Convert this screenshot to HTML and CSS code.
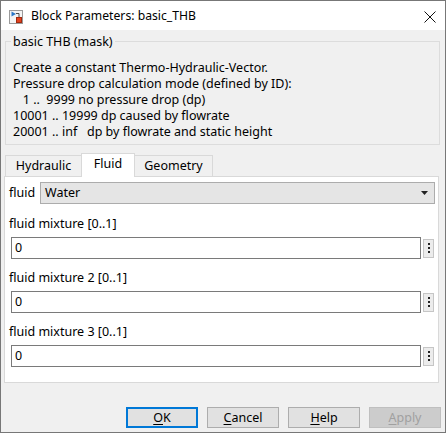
FILE: index.html
```html
<!DOCTYPE html>
<html>
<head>
<meta charset="utf-8">
<link rel="stylesheet" href="styles.css">
</head>
<body>
<div class="window">
  <div class="titlebar">
    <svg class="app-icon" width="14" height="14" viewBox="0 0 14 14">
      <rect x="0.5" y="0.5" width="13" height="13" fill="#f4f4f4" stroke="#9a9a9a"/>
      <path d="M7 3.5 H10 V7" fill="none" stroke="#4a4a4a" stroke-width="1"/>
      <polygon points="2.5,1.5 2.5,6.5 7,4" fill="#2a78c8"/>
      <rect x="7.5" y="7.5" width="5" height="5" fill="#e2421d" stroke="#a02a10"/>
    </svg>
    <span class="title">Block Parameters: basic_THB</span>
    <svg class="close" width="12" height="12" viewBox="0 0 12 12">
      <path d="M0.5 0.5 L11.5 11.5 M11.5 0.5 L0.5 11.5" stroke="#111" stroke-width="1"/>
    </svg>
  </div>
  <div class="content">
    <div class="group">
      <div class="group-title">basic THB (mask)</div>
      <div class="desc">Create a constant Thermo-Hydraulic-Vector.
Pressure drop calculation mode (defined by ID):
   1 ..  9999 no pressure drop (dp)
10001 .. 19999 dp caused by flowrate
20001 .. inf   dp by flowrate and static height</div>
    </div>
    <div class="tabs">
      <div class="tab tab-hyd">Hydraulic</div>
      <div class="tab tab-fluid active">Fluid</div>
      <div class="tab tab-geo">Geometry</div>
    </div>
    <div class="panel">
      <div class="fluid-row">
        <span class="fluid-label">fluid</span>
        <div class="select">
          <span>Water</span>
          <svg class="arrow" width="7" height="4" viewBox="0 0 7 4"><polygon points="0,0 7,0 3.5,4" fill="#222"/></svg>
        </div>
      </div>
      <div class="field">
        <div class="label">fluid mixture [0..1]</div>
        <div class="input-row">
          <div class="input">0</div>
          <div class="dots"><i></i><i></i><i></i></div>
        </div>
      </div>
      <div class="field">
        <div class="label">fluid mixture 2 [0..1]</div>
        <div class="input-row">
          <div class="input">0</div>
          <div class="dots"><i></i><i></i><i></i></div>
        </div>
      </div>
      <div class="field">
        <div class="label">fluid mixture 3 [0..1]</div>
        <div class="input-row">
          <div class="input">0</div>
          <div class="dots"><i></i><i></i><i></i></div>
        </div>
      </div>
    </div>
    <div class="buttons">
      <div class="btn btn-default"><u>O</u>K</div>
      <div class="btn"><u>C</u>ancel</div>
      <div class="btn"><u>H</u>elp</div>
      <div class="btn btn-disabled"><u>A</u>pply</div>
    </div>
  </div>
</div>
</body>
</html>
```

FILE: styles.css
```css
* { box-sizing: border-box; }
html, body { margin: 0; padding: 0; }
body {
  width: 446px;
  height: 433px;
  font-family: "Noto Sans", "Segoe UI", sans-serif;
  font-size: 12.5px;
  color: #000;
  background: #f0f0f0;
}
.window {
  width: 446px;
  height: 433px;
  border: 1px solid #777;
  background: #f0f0f0;
  display: flex;
  flex-direction: column;
}
.titlebar {
  height: 29px;
  background: #fff;
  display: flex;
  align-items: center;
  padding-left: 8px;
  flex-shrink: 0;
}
.app-icon { display: block; margin-top: 2px; }
.title {
  margin-left: 8px;
  font-size: 12.2px;
  line-height: 16px;
  margin-top: 1px;
}
.close {
  margin-left: auto;
  margin-right: 9px;
  margin-top: 2px;
  display: block;
}
.content {
  flex: 1;
  display: flex;
  flex-direction: column;
}
.group {
  margin: 11px 5px 0 4px;
  border: 1px solid #dcdcdc;
  padding: 0 0 4px 0;
}
.group-title {
  display: table;
  margin: -8px 0 0 5px;
  padding: 0 2px;
  background: #f0f0f0;
  line-height: 16px;
}
.desc {
  margin-top: 10px;
  padding-left: 7px;
  white-space: pre;
  line-height: 16px;
}
.tabs {
  display: flex;
  align-items: flex-end;
  height: 23px;
  margin: 8px 0 0 4px;
}
.tab {
  height: 21px;
  border: 1px solid #d9d9d9;
  border-bottom: none;
  background: #f0f0f0;
  text-align: center;
  line-height: 20px;
}
.tab-hyd { width: 76px; border-right: none; }
.tab-fluid { width: 54px; }
.tab-geo { width: 78px; border-left: none; }
.tab.active {
  height: 24px;
  background: #fff;
  margin-bottom: -1px;
  position: relative;
  z-index: 1;
  line-height: 20px;
}
.panel {
  margin: 0 6px 0 3px;
  height: 207px;
  border: 1px solid #d9d9d9;
  background: #fff;
  padding: 5px 3px 0 4px;
}
.fluid-row {
  display: flex;
  align-items: center;
  height: 22px;
}
.fluid-label { width: 31px; line-height: 16px; }
.select {
  flex: 1;
  height: 22px;
  background: #e5e5e5;
  border: 1px solid #acacac;
  display: flex;
  align-items: center;
  padding: 0 6px 0 4px;
  line-height: 16px;
}
.arrow { margin-left: auto; display: block; }
.field { padding-top: 12px; }
.field + .field { padding-top: 11px; }
.label { line-height: 16px; }
.input-row {
  display: flex;
  align-items: center;
  margin-top: 5px;
  padding-left: 2px;
}
.input {
  width: 410px;
  height: 22px;
  border: 1px solid #7a7a7a;
  background: #fff;
  padding-left: 3px;
  line-height: 20px;
}
.dots {
  width: 11px;
  height: 19px;
  margin-left: 2px;
  border: 1px solid #c6c6c6;
  background: #ececec;
  display: flex;
  flex-direction: column;
  align-items: center;
  justify-content: center;
  gap: 2px;
}
.dots i {
  display: block;
  width: 2px;
  height: 2px;
  background: #222;
}
.buttons {
  display: flex;
  justify-content: flex-end;
  gap: 9px;
  margin-top: 24px;
  padding-right: 4px;
}
.btn {
  width: 72px;
  height: 21px;
  border: 1px solid #adadad;
  background: #e1e1e1;
  text-align: center;
  line-height: 19px;
}
.btn u { text-decoration: underline; text-underline-offset: 2px; }
.btn-default {
  border: 2px solid #0078d7;
  line-height: 17px;
}
.btn-disabled {
  background: #cccccc;
  border-color: #bfbfbf;
  color: #a0a0a0;
}
```
